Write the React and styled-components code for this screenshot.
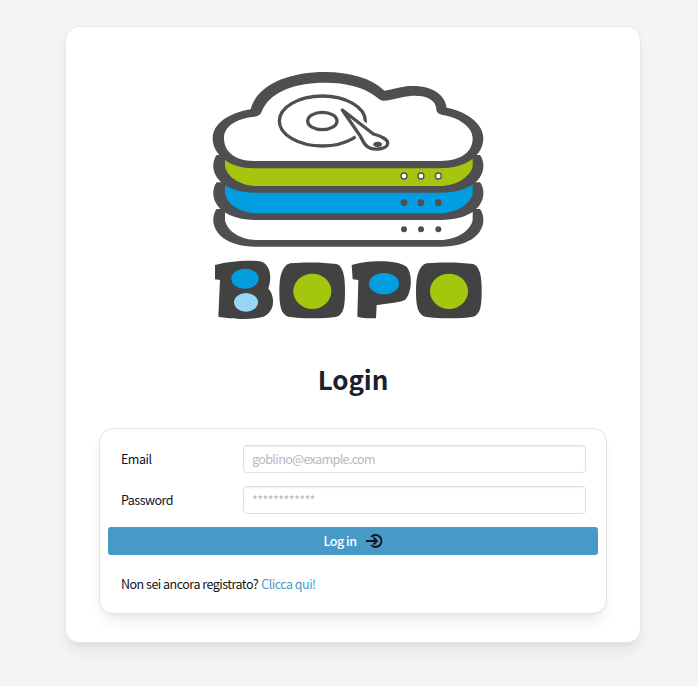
import styled, { createGlobalStyle } from "styled-components";

const GlobalStyle = createGlobalStyle`
  html, body {
    margin: 0;
    padding: 0;
    background: #f3f4f6;
  }
  * {
    box-sizing: border-box;
  }
`;

const Page = styled.main`
  display: flex;
  justify-content: center;
  align-items: flex-start;
  min-height: 686px;
  padding: 26px 0 0 8px;
  font-family: "Noto Sans CJK SC", "Noto Sans", sans-serif;
  font-size: 12.5px;
  letter-spacing: -0.5px;
  color: #0f141b;
`;

const Card = styled.section`
  width: 576px;
  height: 617px;
  padding: 33px 33px 0;
  background: #fff;
  border: 1px solid #e5e7eb;
  border-radius: 14px;
  box-shadow: 0 10px 15px -3px rgba(0, 0, 0, 0.08), 0 4px 6px -4px rgba(0, 0, 0, 0.08);
`;

const LogoWrap = styled.div`
  display: flex;
  justify-content: center;
  height: 270px;
`;

const Title = styled.h1`
  display: flex;
  align-items: center;
  justify-content: center;
  height: 98px;
  margin: 0;
  padding-bottom: 2px;
  font-size: 26px;
  font-weight: 700;
  letter-spacing: -0.1px;
  color: #1a202c;
`;

const FormCard = styled.form`
  height: 186px;
  padding: 16px 8px 0;
  background: #fff;
  border: 1px solid #e0e2e5;
  border-radius: 14px;
  box-shadow: 0 10px 15px -3px rgba(0, 0, 0, 0.07), 0 4px 6px -4px rgba(0, 0, 0, 0.07);
`;

const Row = styled.label`
  display: grid;
  grid-template-columns: 122px 1fr;
  align-items: center;
  height: 28px;
  margin: 0 12px 13px 13px;
`;

const RowLabel = styled.span`
  padding-bottom: 2px;
`;

const Input = styled.input`
  width: 100%;
  height: 28px;
  padding: 0 8px 2px;
  font: inherit;
  letter-spacing: -0.6px;
  background: #fff;
  border: 1px solid #dcdfe3;
  border-radius: 4px;
  box-shadow: inset 0 1px 2px rgba(10, 10, 10, 0.06);
  outline: none;
  &::placeholder {
    color: #b4b8be;
    opacity: 1;
  }
`;

const Button = styled.button`
  display: flex;
  align-items: center;
  justify-content: center;
  gap: 10px;
  width: 100%;
  height: 28px;
  padding: 0 0 0 1px;
  font: inherit;
  font-weight: 500;
  letter-spacing: inherit;
  color: #fff;
  background: #479ac7;
  border: 0;
  border-radius: 3px;
`;

const ButtonText = styled.span`
  padding-bottom: 2px;
`;

const Footer = styled.p`
  display: flex;
  align-items: center;
  gap: 3px;
  height: 57px;
  margin: 0;
  padding: 0 13px;
`;

const Link = styled.a`
  color: #479ac7;
  text-decoration: none;
`;

const DARK = "#4f4f51";
const WORD = "#434242";
const GREEN = "#a4c60f";
const BLUE = "#009ee0";

const layerOuter = (b) =>
  `M50 ${b - 113} C24 ${b - 78} 42 ${b} 170 ${b} H720 C848 ${b} 866 ${b - 78} 840 ${b - 113} Z`;
const layerInner = (b) =>
  `M75 ${b - 98} V${b - 60} C80 ${b - 28} 120 ${b} 170 ${b} H720 C770 ${b} 812 ${b - 28} 818 ${b - 60} V${b - 98} Z`;

// drawn on a 3x grid, shown at 306x270
const Logo = () => (
  <svg width="306" height="270" viewBox="0 0 918 810">
    <path d={layerOuter(560)} fill={DARK} />
    <path d={layerInner(540)} fill="#fff" />
    <path d={layerOuter(480)} fill={DARK} />
    <path d={layerInner(460)} fill={BLUE} />
    <path d={layerOuter(398)} fill={DARK} />
    <path d={layerInner(378)} fill={GREEN} />
    <path
      fill={DARK}
      d="M160 325 H720 C800 325 850 285 850 235 C850 190 800 155 740 143 C735 100 690 75 630 78 C600 80 575 90 553 92 C515 55 450 36 375 36 C265 36 170 75 152 148 C90 158 38 190 38 235 C38 285 90 325 160 325 Z"
    />
    <path
      fill="#fff"
      d="M160 303 H720 C785 303 818 275 818 235 C818 200 775 172 728 165 C705 158 710 150 708 140 C700 112 665 105 630 108 C605 110 575 122 550 122 C540 122 535 115 525 108 C490 82 440 68 375 68 C285 68 205 95 183 160 C175 172 160 170 150 172 C105 180 72 200 72 235 C72 275 105 303 160 303 Z"
    />

    <g fill="#fff" stroke={DARK} strokeWidth="4">
      <circle cx="612" cy="348" r="9" />
      <circle cx="663" cy="348" r="9" />
      <circle cx="715" cy="348" r="9" />
    </g>
    <g fill={DARK}>
      <circle cx="612" cy="428" r="10" />
      <circle cx="663" cy="428" r="10" />
      <circle cx="715" cy="428" r="10" />
      <circle cx="612" cy="508" r="9" />
      <circle cx="663" cy="508" r="9" />
      <circle cx="715" cy="508" r="9" />
    </g>

    <g fill="none" stroke={DARK} strokeWidth="10">
      <ellipse cx="367" cy="183" rx="129" ry="75" />
      <ellipse cx="367" cy="183" rx="44" ry="26" />
    </g>
    <path
      d="M427 150 L520 222 C545 228 566 240 563 252 C560 266 530 270 512 265 C495 260 490 245 482 230 Z"
      fill="#fff"
      stroke="#fff"
      strokeWidth="26"
      strokeLinejoin="round"
    />
    <path
      d="M427 150 L520 222 C545 228 566 240 563 252 C560 266 530 270 512 265 C495 260 490 245 482 230 Z"
      fill="#fff"
      stroke={DARK}
      strokeWidth="10"
      strokeLinejoin="round"
    />
    <ellipse cx="533" cy="253" rx="13" ry="8" fill={DARK} />

    <g transform="translate(0 570)">
      <path
        fill={WORD}
        d="M45 45 C80 35 150 28 185 35 C212 45 216 85 205 115 C226 140 226 185 190 200 C150 212 90 206 55 200 L60 90 L45 88 Z"
      />
      <path
        fill={WORD}
        d="M270 40 C310 36 370 36 410 42 C430 50 435 80 435 122 C435 165 432 192 410 200 C370 206 310 206 265 200 C242 192 238 165 238 122 C238 80 245 48 270 40 Z"
      />
      <path
        fill={WORD}
        d="M455 45 C500 30 590 28 620 50 C640 75 635 130 615 150 C590 160 550 162 530 165 L528 205 C510 205 490 205 472 200 L475 90 L458 88 Z"
      />
      <path
        fill={WORD}
        d="M680 40 C720 36 780 36 820 42 C840 50 845 80 845 122 C845 165 842 192 820 200 C780 206 720 206 675 200 C652 192 648 165 648 122 C648 80 655 48 680 40 Z"
      />
      <ellipse cx="135" cy="86" rx="41" ry="30" fill={BLUE} />
      <ellipse cx="138" cy="157" rx="36" ry="28" fill="#99d5f7" />
      <ellipse cx="337" cy="124" rx="57" ry="53" fill={GREEN} />
      <ellipse cx="552" cy="101" rx="45" ry="32" fill={BLUE} />
      <ellipse cx="747" cy="124" rx="57" ry="53" fill={GREEN} />
    </g>
  </svg>
);

const LoginIcon = () => (
  <svg width="17" height="14" viewBox="0 0 17 14" fill="none" stroke="#10151c" strokeWidth="1.8">
    <path d="M0 7 H11 M7.5 3.500 L11 7 L7.5 10.500" />
    <path d="M5.200 2.800 A6 6 0 1 1 5.200 11.200" />
  </svg>
);

const App = () => (
  <>
    <GlobalStyle />
    <Page>
      <Card>
        <LogoWrap>
          <Logo />
        </LogoWrap>
        <Title>Login</Title>
        <FormCard onSubmit={(e) => e.preventDefault()}>
          <Row>
            <RowLabel>Email</RowLabel>
            <Input type="email" placeholder="goblino@example.com" />
          </Row>
          <Row>
            <RowLabel>Password</RowLabel>
            <Input type="password" placeholder="************" />
          </Row>
          <Button type="submit">
            <ButtonText>Log in</ButtonText>
            <LoginIcon />
          </Button>
          <Footer>
            Non sei ancora registrato? <Link href="#">Clicca qui!</Link>
          </Footer>
        </FormCard>
      </Card>
    </Page>
  </>
);

export default App;
